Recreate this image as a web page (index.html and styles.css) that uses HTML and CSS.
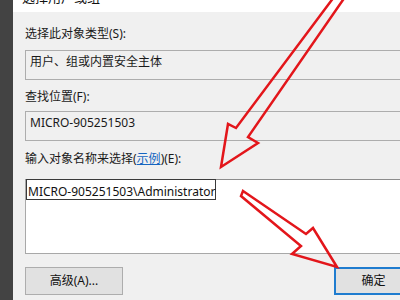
FILE: index.html
```html
<!DOCTYPE html>
<html lang="zh-CN">
<head>
<meta charset="utf-8">
<title>选择用户或组</title>
<link rel="stylesheet" href="styles.css">
</head>
<body>
<div class="screen">
  <div class="strip"></div>
  <div class="dialog">
    <div class="titlebar"><span class="title">选择用户或组</span></div>
    <div class="content">
      <div class="label first">选择此对象类型(S):</div>
      <div class="field">用户、组或内置安全主体</div>
      <div class="label second">查找位置(F):</div>
      <div class="field loc">MICRO-905251503</div>
      <div class="label third">输入对象名称来选择(<a class="link">示例</a>)(E):</div>
      <div class="textarea"><span class="name">MICRO-905251503\Administrator</span></div>
      <div class="buttons">
        <button class="btn">高级(A)...</button>
        <button class="btn ok">确定</button>
      </div>
    </div>
  </div>
  <svg class="arrows" width="400" height="300" viewBox="0 0 400 300">
    <path d="M334,-3 L236,128 L228,124 L221,167 L258,143 L248,137 L345,-3" />
    <path d="M243,191 L306,234 L313,228 L337,267 L292,254 L301,246 L241,196 Z" />
  </svg>
</div>
</body>
</html>
```

FILE: styles.css
```css
html, body {
  margin: 0;
  padding: 0;
  background: #f0f0f0;
}
.screen {
  position: relative;
  width: 400px;
  height: 300px;
  overflow: hidden;
  display: flex;
  font-family: "Noto Sans", "Noto Sans CJK SC", sans-serif;
  font-size: 12px;
  color: #1a1a1a;
}
.strip {
  flex: none;
  width: 13px;
  background: #434343;
}
.dialog {
  flex: none;
  width: 412px;
  background: #f0f0f0;
  display: flex;
  flex-direction: column;
}
.titlebar {
  height: 12px;
  background: #ffffff;
  overflow: hidden;
}
.title {
  display: block;
  margin-top: -9px;
  padding-left: 9px;
  font-size: 13px;
  line-height: 13px;
  color: #111;
}
.content {
  padding: 0 12px 0 12px;
  display: flex;
  flex-direction: column;
}
.label {
  line-height: 14px;
  height: 14px;
  white-space: nowrap;
}
.label.first { margin-top: 15px; }
.label.second { margin-top: 10px; }
.label.third { margin-top: 11px; }
.link {
  color: #1565c0;
  text-decoration: underline;
}
.field {
  box-sizing: border-box;
  height: 30px;
  border: 1px solid #adadad;
  background: #f0f0f0;
  padding: 4px 4px;
  line-height: 14px;
  margin-top: 9px;
  white-space: nowrap;
}
.field.loc { margin-top: 7px; }
.textarea {
  box-sizing: border-box;
  height: 75px;
  margin-top: 13px;
  border: 1px solid #a8a8a8;
  border-top-color: #8c8c8c;
  background: #ffffff;
}
.name {
  display: inline-block;
  margin-top: -1px;
  border: 1px solid #3a3a3a;
  padding: 5px 0 0 1px;
  line-height: 14px;
  height: 14px;
  white-space: nowrap;
  color: #111;
}
.buttons {
  margin-top: 13px;
  display: flex;
  justify-content: space-between;
}
.btn {
  box-sizing: border-box;
  width: 98px;
  height: 28px;
  background: #e1e1e1;
  border: 1px solid #adadad;
  font-family: "Noto Sans", "Noto Sans CJK SC", sans-serif;
  font-size: 12px;
  color: #111;
  padding: 0;
  line-height: 14px;
}
.btn.ok {
  width: 79px;
  border: 2px solid #1f7ccf;
}
.arrows {
  position: absolute;
  left: 0;
  top: 0;
  pointer-events: none;
}
.arrows path {
  fill: none;
  stroke: #e3161b;
  stroke-width: 2.5;
  stroke-linejoin: miter;
}
```
